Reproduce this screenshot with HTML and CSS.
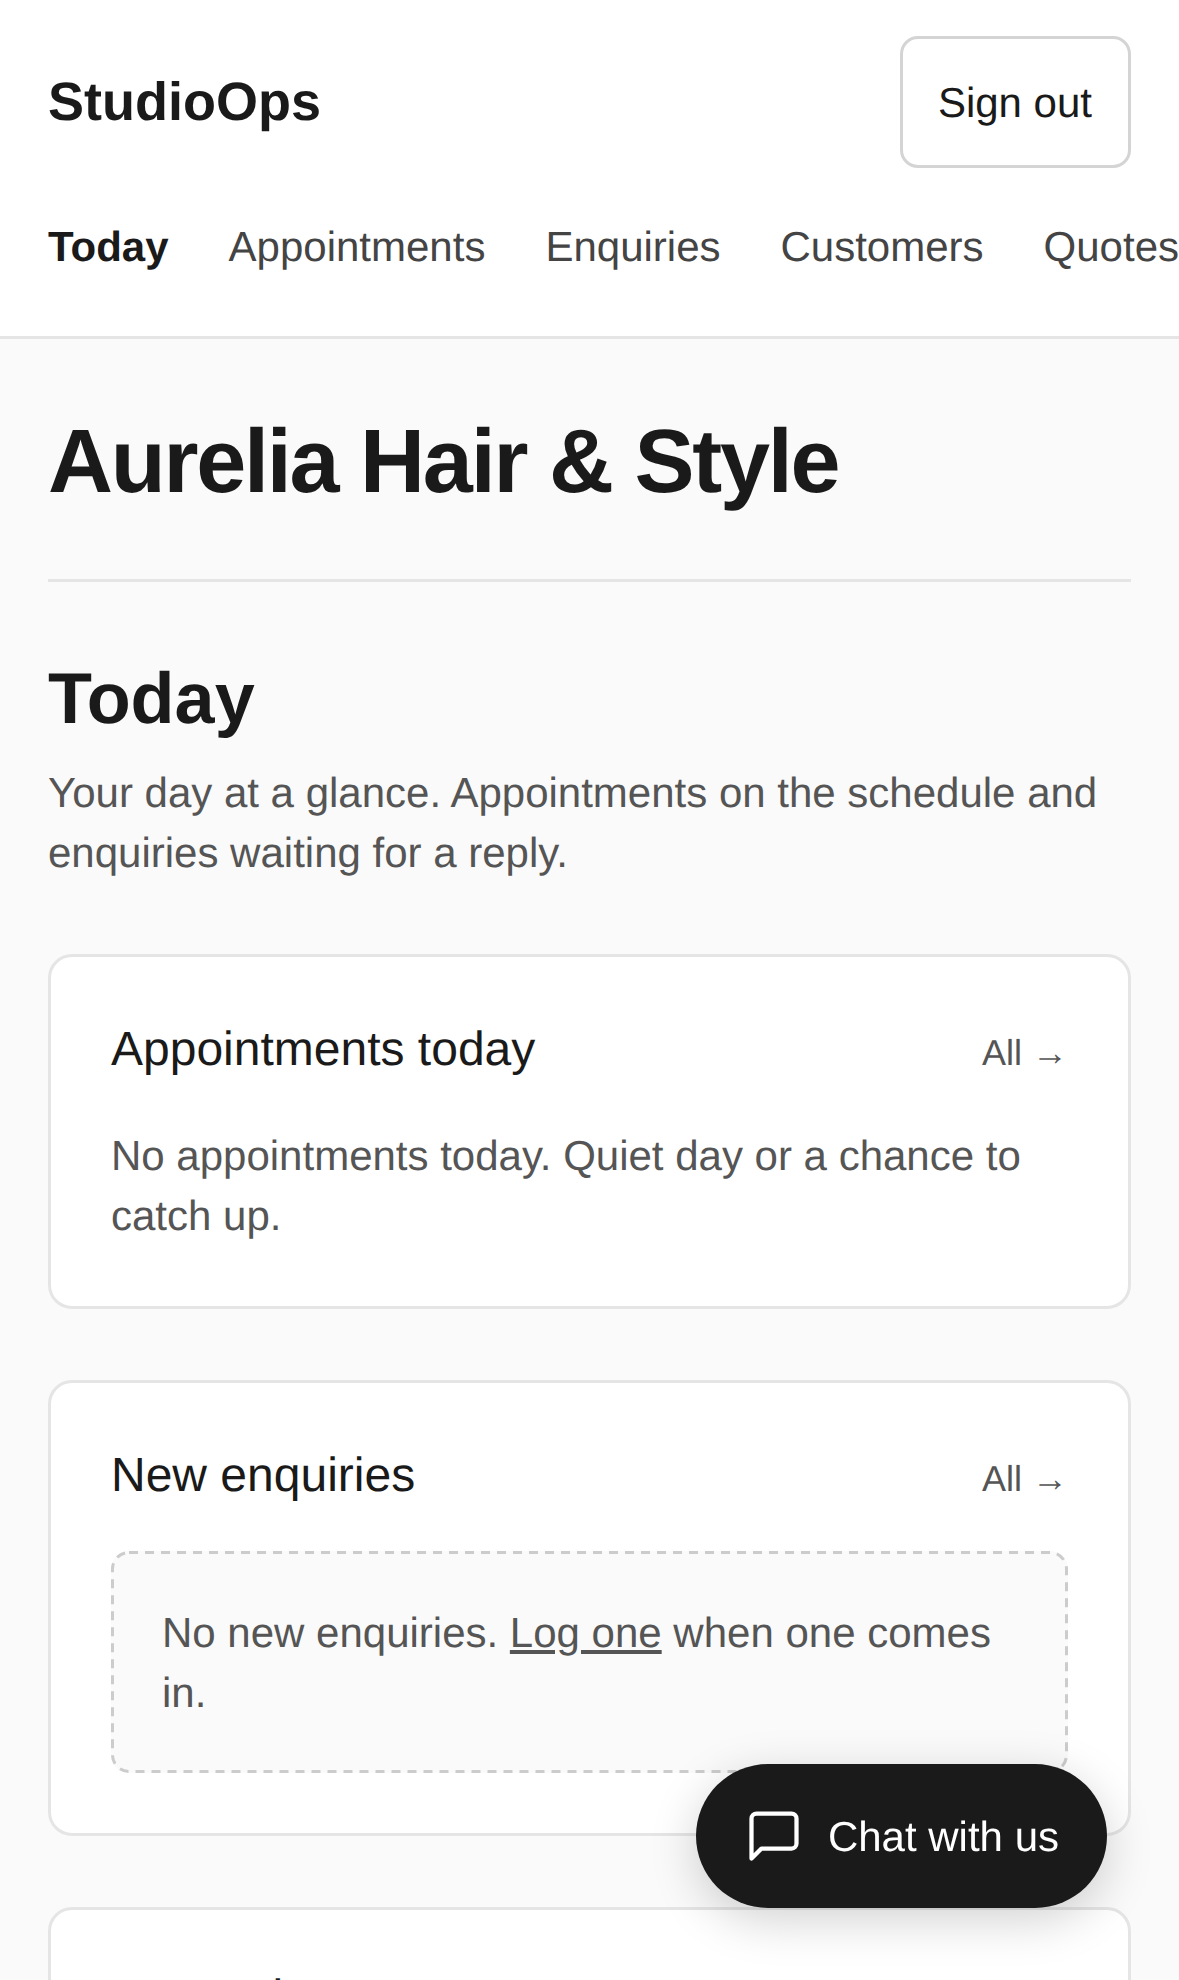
FILE: index.html
```html
<!DOCTYPE html>
<html lang="en">
<head>
  <meta charset="UTF-8" />
  <meta name="viewport" content="width=device-width, initial-scale=1" />
  <title>StudioOps</title>
  <link rel="stylesheet" href="styles.css">
</head>
<body>

<header class="site-header">
  <div class="header-top">
    <a class="logo" href="#">StudioOps</a>
    <button class="sign-out" type="button">Sign out</button>
  </div>
  <nav class="main-nav">
    <a class="active" href="#">Today</a>
    <a href="#">Appointments</a>
    <a href="#">Enquiries</a>
    <a href="#">Customers</a>
    <a href="#">Quotes</a>
  </nav>
</header>

<main class="content">
  <h1 class="business-name">Aurelia Hair &amp; Style</h1>

  <section class="intro">
    <h2>Today</h2>
    <p>Your day at a glance. Appointments on the schedule and enquiries waiting for a reply.</p>
  </section>

  <section class="card">
    <div class="card-head">
      <h3>Appointments today</h3>
      <a class="all-link" href="#">All →</a>
    </div>
    <p class="card-text">No appointments today. Quiet day or a chance to catch up.</p>
  </section>

  <section class="card">
    <div class="card-head">
      <h3>New enquiries</h3>
      <a class="all-link" href="#">All →</a>
    </div>
    <div class="empty-box">
      <svg class="dash-frame" aria-hidden="true"><rect class="dash-line" x="1.5" y="1.5" rx="16.5" /></svg>
      No new enquiries. <a href="#">Log one</a> when one comes in.
    </div>
  </section>

  <section class="card card-compact">
    <h3>Processing</h3>
  </section>
</main>

<button class="chat-button" type="button">
  <svg class="chat-icon" viewBox="0 0 24 24" fill="none" stroke="currentColor" stroke-width="1.7" stroke-linecap="round" stroke-linejoin="round" aria-hidden="true">
    <path d="M21 15a2 2 0 0 1-2 2H7l-4 4V5a2 2 0 0 1 2-2h14a2 2 0 0 1 2 2z"/>
  </svg>
  <span class="chat-label">Chat with us</span>
</button>

</body>
</html>
```

FILE: styles.css
```css
html, body {
  height: 1980px;
  overflow: hidden;
}
body {
  margin: 0; padding: 0;
  font-family: 'Liberation Sans', Arial, sans-serif;
  background-color: #fafafa;
  color: #1a1a1a;
  text-rendering: geometricPrecision;
}
a {
  color: inherit;
  text-decoration: none;
}
.site-header {
  background: #fff;
  border-bottom: 3px solid #e5e5e5;
  padding: 36px 48px 0;
  height: 300px;
}
.header-top {
  display: flex;
  justify-content: space-between;
  align-items: center;
}
.logo {
  font-size: 54px;
  font-weight: 700;
}
.sign-out {
  height: 132px;
  padding: 2px 36px 0 35px;
  background: #fff;
  border: 3px solid #d4d4d4;
  border-radius: 18px;
  color: #1a1a1a;
  font-family: inherit;
  font-size: 42px;
  text-rendering: inherit;
}
.main-nav {
  display: flex;
  gap: 60px;
  margin-top: 55px;
  margin-right: -48px;
  overflow: hidden;
  font-size: 42px;
  line-height: 48px;
  color: #444;
  white-space: nowrap;
}
.main-nav .active {
  color: #1a1a1a;
  font-weight: 700;
}
.content {
  padding: 72px 48px 0;
}
.business-name {
  margin: 0;
  padding-bottom: 66px;
  border-bottom: 3px solid #e5e5e5;
  font-size: 90px;
  line-height: 102px;
  letter-spacing: -0.025em;
}
.intro {
  margin-top: 72px;
}
.intro h2 {
  margin: 0;
  font-size: 72px;
  line-height: 90px;
}
.intro p {
  margin: 19px 0 0;
  font-size: 42px;
  line-height: 60px;
  color: #555;
}
.card {
  margin-top: 71px;
  padding: 60px;
  background: #fff;
  border: 3px solid #e5e5e5;
  border-radius: 24px;
}
.card-compact {
  padding: 55px 48px 48px;
}
.card-head {
  display: flex;
  justify-content: space-between;
  align-items: baseline;
}
.card h3 {
  margin: 0;
  font-size: 48px;
  font-weight: 400;
  line-height: 66px;
}
.all-link {
  font-size: 36px;
  color: #555;
}
.card-text {
  margin: 43px 0 0;
  font-size: 42px;
  line-height: 60px;
  color: #555;
}
.empty-box {
  position: relative;
  margin-top: 42px;
  padding: 52px 51px 50px;
  background: #fafafa;
  border-radius: 18px;
  font-size: 42px;
  line-height: 60px;
  color: #555;
}
.empty-box a {
  text-decoration: underline;
}
.dash-frame {
  position: absolute;
  top: 0;
  left: 0;
  width: 100%;
  height: 100%;
}
.dash-line {
  width: calc(100% - 3px);
  height: calc(100% - 3px);
  fill: none;
  stroke: #cccccc;
  stroke-width: 3;
  stroke-dasharray: 9 7;
}
.chat-button {
  position: fixed;
  right: 72px;
  bottom: 72px;
  display: flex;
  align-items: center;
  gap: 24px;
  height: 144px;
  padding: 0 48px;
  background: #1a1a1a;
  border: 0;
  border-radius: 72px;
  box-shadow: 0 12px 48px rgba(0,0,0,0.18);
  color: #fff;
  font-family: inherit;
  font-size: 42px;
  text-rendering: inherit;
}
.chat-icon {
  width: 60px;
  height: 60px;
}
.chat-label {
  padding-top: 2px;
}
```
